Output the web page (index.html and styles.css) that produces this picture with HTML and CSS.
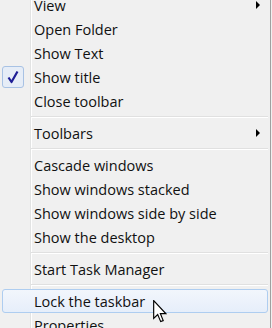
FILE: index.html
```html
<!DOCTYPE html>
<html lang="en">
<head>
    <meta charset="UTF-8">
    <meta name="viewport" content="width=device-width, initial-scale=1.0">
    <title>Taskbar menu</title>
    <link rel="stylesheet" href="styles.css">
</head>
<body>
    <div id="menu" class="menu">
        <div class="item"><span class="icon"></span><span class="label">View</span><span class="arrow"></span></div>
        <div class="item"><span class="icon"></span><span class="label">Open Folder</span></div>
        <div class="item"><span class="icon"></span><span class="label">Show Text</span></div>
        <div class="item">
            <span class="icon checkbox">
                <svg width="22" height="22" viewBox="0 0 22 22"><path d="M6.5 11.5 L9.5 16 L15.5 5.5" fill="none" stroke="#1e1e96" stroke-width="2.2" stroke-linejoin="round"/></svg>
            </span>
            <span class="label">Show title</span>
        </div>
        <div class="item"><span class="icon"></span><span class="label">Close toolbar</span></div>
        <div class="sep"></div>
        <div class="item"><span class="icon"></span><span class="label">Toolbars</span><span class="arrow"></span></div>
        <div class="sep"></div>
        <div class="item"><span class="icon"></span><span class="label">Cascade windows</span></div>
        <div class="item"><span class="icon"></span><span class="label">Show windows stacked</span></div>
        <div class="item"><span class="icon"></span><span class="label">Show windows side by side</span></div>
        <div class="item"><span class="icon"></span><span class="label">Show the desktop</span></div>
        <div class="sep"></div>
        <div class="item"><span class="icon"></span><span class="label">Start Task Manager</span></div>
        <div class="sep"></div>
        <div class="item hover"><span class="icon"></span><span class="label">Lock the taskbar</span></div>
        <div class="item"><span class="icon"></span><span class="label">Properties</span></div>
    </div>
    <svg class="cursor" width="14" height="23" viewBox="0 0 12 20">
        <path d="M0.5 0.5 L0.5 16 L4 12.6 L6.6 18.8 L8.8 17.9 L6.3 11.8 L11 11.8 Z" fill="#fff" stroke="#000" stroke-width="1" stroke-linejoin="miter"/>
    </svg>
</body>
</html>
```

FILE: styles.css
```css
html, body {
    margin: 0;
    padding: 0;
    overflow: hidden;
}
body {
    position: relative;
    width: 272px;
    height: 328px;
    background-color: #f0f0f0;
    font-family: "Open Sans", "Noto Sans", sans-serif;
    font-size: 14.5px;
    color: #111;
}
.menu {
    width: 270px;
    margin-top: -7px;
    border-right: 1px solid #a0a0a0;
    background: linear-gradient(to right, #f0f0f0 30px, #e2e3e3 30px, #e2e3e3 31px, #fff 31px, #fff 32px, #f0f0f0 32px);
}
.item {
    display: flex;
    align-items: center;
    height: 24px;
    box-sizing: border-box;
    margin: 0 2px;
    border: 1px solid transparent;
    border-radius: 3px;
}
.icon {
    width: 22px;
    height: 22px;
    margin-left: -1px;
    margin-right: 10px;
    box-sizing: border-box;
    flex-shrink: 0;
}
.checkbox {
    border: 1px solid #a8c2e4;
    border-radius: 3px;
    background-color: #e6edf7;
}
.checkbox svg {
    display: block;
    margin: -1px;
}
.label {
    white-space: nowrap;
}
.arrow {
    margin-left: auto;
    margin-right: 7px;
    width: 0;
    height: 0;
    border-left: 4px solid #000;
    border-top: 4px solid transparent;
    border-bottom: 4px solid transparent;
}
.sep {
    height: 1px;
    background-color: #e0e0e0;
    border-bottom: 1px solid #fff;
    margin: 3px 2px 3px 31px;
}
.hover {
    border-color: #aecdf0;
    background: linear-gradient(to bottom, #f2f6fc, #e6eefa);
}
.cursor {
    position: absolute;
    left: 153px;
    top: 300px;
}
```
